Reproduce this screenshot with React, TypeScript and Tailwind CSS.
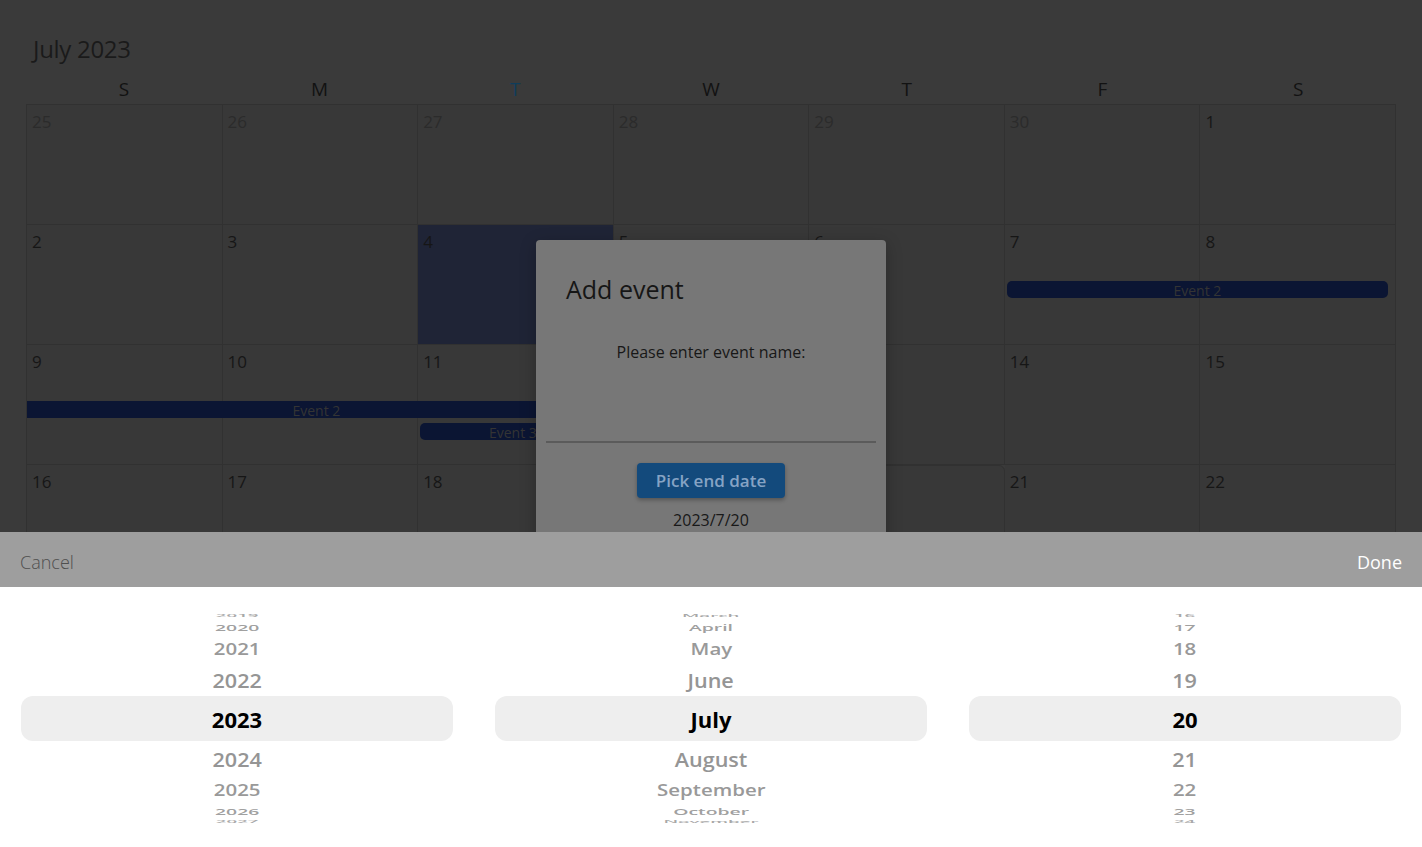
import React from 'react';

const FONT = { fontFamily: '"Open Sans", "Noto Sans", sans-serif' };

const COL_START = ['col-start-1', 'col-start-2', 'col-start-3', 'col-start-4', 'col-start-5', 'col-start-6', 'col-start-7'];
const COL_SPAN = ['col-span-1', 'col-span-2', 'col-span-3', 'col-span-4', 'col-span-5', 'col-span-6', 'col-span-7'];

type Day = { n: number; other: boolean };
type CalEvent = { label: string; start: number; span: number; lane: 1 | 2; cont?: boolean };

const HEADERS = ['S', 'M', 'T', 'W', 'T', 'F', 'S'];

function buildWeeks(): Day[][] {
  const weeks: Day[][] = [];
  for (let w = 0; w < 6; w++) {
    const row: Day[] = [];
    for (let d = 0; d < 7; d++) {
      const i = w * 7 + d;
      if (i < 6) row.push({ n: 25 + i, other: true });
      else {
        const n = i - 5;
        row.push(n > 31 ? { n: n - 31, other: true } : { n, other: false });
      }
    }
    weeks.push(row);
  }
  return weeks;
}

const EVENTS: Record<number, CalEvent[]> = {
  1: [{ label: 'Event 2', start: 5, span: 2, lane: 1 }],
  2: [
    { label: 'Event 2', start: 0, span: 3, lane: 1, cont: true },
    { label: 'Event 3', start: 2, span: 1, lane: 2 },
  ],
};

function Calendar() {
  const weeks = buildWeeks();
  return (
    <div className="h-full bg-[#3a3a3a] pt-[33px]">
      <h1 className="pl-[33px] text-[24px] font-normal leading-[32px] tracking-[-0.3px] text-[#1a1a1a]">July 2023</h1>

      <div className="mx-[26px] mt-[10px] grid h-[29px] grid-cols-7">
        {HEADERS.map((h, i) => (
          <div
            key={i}
            className={`text-center text-[19px] leading-[28px] ${i === 2 ? 'text-[#0f3d5a]' : 'text-[#121212]'}`}
          >
            {h}
          </div>
        ))}
      </div>

      {/* month grid */}
      <div className="mx-[26px] border-t border-l border-[#313131]">
        {weeks.map((week, wi) => (
          <div key={wi} className="grid h-[120px] grid-cols-7 grid-rows-[56px_17px_5px_17px_1fr] border-b border-[#313131]">
            {week.map((day, di) => {
              const today = wi === 1 && di === 2;
              const picked = wi === 3 && di === 4;
              return (
                <div
                  key={di}
                  className={`row-span-5 row-start-1 border-r border-[#313131] pt-[5px] pl-[5px] text-[17px] leading-[24px] ${COL_START[di]} ${
                    today ? 'bg-[#1f2436]' : 'bg-[#383838]'
                  } ${picked ? 'rounded-[6px] border border-[#11235a]' : ''} ${
                    day.other ? 'text-[#2b2b2b]' : 'text-[#161616]'
                  }`}
                >
                  {day.n}
                </div>
              );
            })}
            {(EVENTS[wi] || []).map((ev, ei) => (
              <div
                key={`e${ei}`}
                className={`${COL_START[ev.start]} ${COL_SPAN[ev.span - 1]} ${ev.lane === 1 ? 'row-start-2' : 'row-start-4'} ${
                  ev.cont ? 'ml-0 rounded-r-[5px]' : 'ml-[2px] rounded-[5px]'
                } mr-[8px] h-[17px] overflow-hidden bg-[#0b1533] text-center text-[14px] leading-[19px] text-[#343434]`}
              >
                {ev.label}
              </div>
            ))}
          </div>
        ))}
      </div>
    </div>
  );
}

function AddEventDialog() {
  return (
    <div className="absolute top-[240px] left-[536px] h-[320px] w-[350px] rounded-[4px] bg-[#777777] pt-[31px] shadow-[0_4px_16px_rgba(0,0,0,0.25)]">
      <h2 className="pl-[30px] text-[25px] leading-[36px] text-[#161616]">Add event</h2>
      <p className="mt-[33px] text-center text-[16px] leading-[24px] text-[#181818]">Please enter event name:</p>
      <div className="mx-[10px] h-[79px] border-b-2 border-[#5b5b5b]" />
      <div className="mt-[20px] flex justify-center">
        <button className="h-[35px] w-[148px] rounded-[4px] bg-[#134a7c] text-[17px] font-semibold text-[#86a3c4] shadow-[0_2px_4px_rgba(0,0,0,0.3)]">
          Pick end date
        </button>
      </div>
      <p className="mt-[11px] text-center text-[16px] leading-[22px] text-[#181818]">2023/7/20</p>
    </div>
  );
}

// wheel rows, from top (-4) to bottom (+4)
const WHEEL_ROWS = [
  { h: 'h-[8px]', t: 'scale-x-[0.85] scale-y-[0.12]', c: 'font-semibold text-[#a8a8a8]' },
  { h: 'h-[14px]', t: 'scale-x-[0.88] scale-y-[0.42]', c: 'font-semibold text-[#a0a0a0]' },
  { h: 'h-[30px]', t: 'scale-x-[0.93] scale-y-[0.7]', c: 'font-semibold text-[#999999]' },
  { h: 'h-[32px]', t: 'scale-x-[0.98] scale-y-[0.93]', c: 'font-semibold text-[#959595]' },
  { h: 'h-[45px]', t: '', c: 'font-bold text-black' },
  { h: 'h-[35px]', t: 'scale-x-[0.98] scale-y-[0.93]', c: 'font-semibold text-[#959595]' },
  { h: 'h-[27px]', t: 'scale-x-[0.93] scale-y-[0.7]', c: 'font-semibold text-[#999999]' },
  { h: 'h-[15px]', t: 'scale-x-[0.88] scale-y-[0.42]', c: 'font-semibold text-[#a0a0a0]' },
  { h: 'h-[8px]', t: 'scale-x-[0.85] scale-y-[0.12]', c: 'font-semibold text-[#a8a8a8]' },
];

const YEARS = ['2019', '2020', '2021', '2022', '2023', '2024', '2025', '2026', '2027'];
const MONTHS = ['March', 'April', 'May', 'June', 'July', 'August', 'September', 'October', 'November'];
const DAYS = ['16', '17', '18', '19', '20', '21', '22', '23', '24'];

function Wheel({ items }: { items: string[] }) {
  return (
    <div className="flex flex-col">
      {items.map((label, i) => {
        const row = WHEEL_ROWS[i];
        const center = i === 4;
        return (
          <div
            key={label}
            className={`flex items-center justify-center overflow-hidden ${row.h} ${center ? 'rounded-[12px] bg-[#eeeeee]' : ''}`}
          >
            <span className={`inline-block text-[22px] leading-none ${row.t} ${row.c}`}>{label}</span>
          </div>
        );
      })}
    </div>
  );
}

function DatePickerSheet() {
  return (
    <div className="absolute inset-x-0 bottom-0 h-[315px]">
      <div className="flex h-[55px] items-center justify-between bg-[#9e9e9e] px-[20px] pt-[5px] text-[18px]">
        <button className="font-light text-[#4f4f4f]">Cancel</button>
        <button className="text-white">Done</button>
      </div>
      <div className="grid h-[260px] grid-cols-3 gap-[42px] bg-white px-[21px] pt-[25px]">
        <Wheel items={YEARS} />
        <Wheel items={MONTHS} />
        <Wheel items={DAYS} />
      </div>
    </div>
  );
}

export default function App() {
  return (
    <div className="relative h-[847px] w-full overflow-hidden" style={FONT}>
      <Calendar />
      <AddEventDialog />
      <DatePickerSheet />
    </div>
  );
}
